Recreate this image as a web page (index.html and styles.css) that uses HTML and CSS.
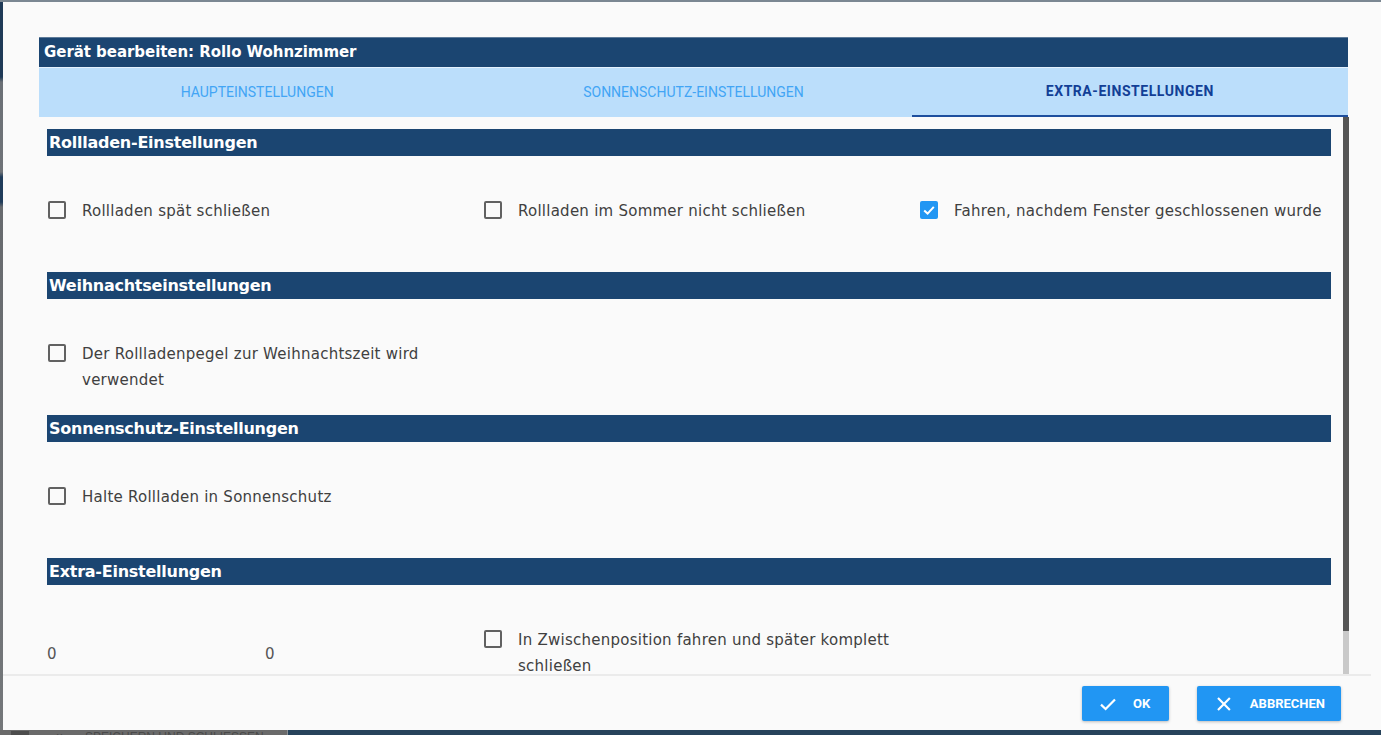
FILE: index.html
```html
<!DOCTYPE html>
<html lang="de">
<head>
<meta charset="utf-8">
<title>Gerät bearbeiten</title>
<link rel="stylesheet" href="styles.css">
</head>
<body>
<div class="screen">
  <div class="top-strip"></div>
  <div class="mid">
    <div class="left-strip"></div>
    <div class="dialog">
      <div class="dialog-head">
        <div class="title">Gerät bearbeiten: Rollo Wohnzimmer</div>
        <div class="tabs">
          <div class="tab">HAUPTEINSTELLUNGEN</div>
          <div class="tab">SONNENSCHUTZ-EINSTELLUNGEN</div>
          <div class="tab active">EXTRA-EINSTELLUNGEN</div>
        </div>
      </div>
      <div class="scroll">
        <div class="content">
          <section class="section">
            <h2 class="section-title">Rollladen-Einstellungen</h2>
            <div class="section-body">
              <label class="check"><span class="box"></span><span class="text">Rollladen spät schließen</span></label>
              <label class="check"><span class="box"></span><span class="text">Rollladen im Sommer nicht schließen</span></label>
              <label class="check"><span class="box checked"><svg viewBox="0 0 18 18" width="18" height="18"><path d="M4.2 9.4 L7.6 12.6 L13.8 5.8" fill="none" stroke="#fff" stroke-width="2"/></svg></span><span class="text">Fahren, nachdem Fenster geschlossenen wurde</span></label>
            </div>
          </section>
          <section class="section">
            <h2 class="section-title">Weihnachtseinstellungen</h2>
            <div class="section-body">
              <label class="check"><span class="box"></span><span class="text">Der Rollladenpegel zur Weihnachtszeit wird verwendet</span></label>
            </div>
          </section>
          <section class="section">
            <h2 class="section-title">Sonnenschutz-Einstellungen</h2>
            <div class="section-body">
              <label class="check"><span class="box"></span><span class="text">Halte Rollladen in Sonnenschutz</span></label>
            </div>
          </section>
          <section class="section">
            <h2 class="section-title">Extra-Einstellungen</h2>
            <div class="section-body">
              <div class="sliders">
                <span class="val">0</span>
                <span class="val">0</span>
              </div>
              <label class="check"><span class="box"></span><span class="text">In Zwischenposition fahren und später komplett schließen</span></label>
            </div>
          </section>
        </div>
        <div class="scrollbar"><div class="thumb"></div></div>
      </div>
      <div class="footer">
        <button class="btn" type="button">
          <svg viewBox="0 0 16 16" width="16" height="16"><path d="M1 8.6 L5.6 13 L15 3.4" fill="none" stroke="#fff" stroke-width="2.2"/></svg>
          <span>OK</span>
        </button>
        <button class="btn" type="button">
          <svg viewBox="0 0 14 14" width="14" height="14"><path d="M1 1 L13 13 M13 1 L1 13" fill="none" stroke="#fff" stroke-width="2.2"/></svg>
          <span>ABBRECHEN</span>
        </button>
      </div>
    </div>
  </div>
  <div class="bottom-strip">
    <div class="bs-left"><span class="bs-icon"></span><span class="bs-x">×</span><span class="bs-text">SPEICHERN UND SCHLIESSEN</span></div>
    <div class="bs-right"></div>
  </div>
</div>
</body>
</html>
```

FILE: styles.css
```css
* { box-sizing: border-box; }
html, body { margin: 0; padding: 0; }
body {
  width: 1381px;
  height: 735px;
  overflow: hidden;
  font-family: "DejaVu Sans", sans-serif;
  background: #5d6166;
}
.screen {
  display: flex;
  flex-direction: column;
  width: 1381px;
  height: 735px;
}
.top-strip {
  height: 2px;
  background: #7b8792;
  flex: none;
}
.mid {
  flex: 1;
  display: flex;
  min-height: 0;
}
.left-strip {
  width: 3px;
  flex: none;
  background: linear-gradient(#1f3a57 0, #1f3a57 75px, #6b7076 80px, #6f7378 170px, #203c5a 175px, #203c5a 200px, #676a6e 205px, #74777a 735px);
}
.dialog {
  flex: 1;
  min-width: 0;
  background: #fafafa;
  display: flex;
  flex-direction: column;
  padding-top: 35px;
}
.dialog-head {
  margin: 0 33px 0 36px;
}
.title {
  height: 30px;
  background: #1b4571;
  border-top: 1px solid #5e7b99;
  color: #fff;
  font-weight: bold;
  font-size: 15px;
  line-height: 28px;
  padding-left: 5px;
  letter-spacing: -0.05px;
}
.tabs {
  display: grid;
  grid-template-columns: 1fr 1fr 1fr;
  height: 50px;
  background: #bbdefb;
  border-top: 1px solid #e4f1fd;
}
.tab {
  font-family: Roboto, sans-serif;
  font-size: 14px;
  color: #42a5f5;
  text-align: center;
  line-height: 49px;
}
.tab.active {
  color: #123f96;
  font-weight: bold;
  letter-spacing: 0.55px;
  border-bottom: 2px solid #1e4f9e;
  line-height: 47px;
}
.scroll {
  height: 557px;
  flex: none;
  display: flex;
  margin: 0 32px 0 36px;
}
.content {
  flex: 1;
  overflow: hidden;
  padding: 12px 0 0 8px;
}
.scrollbar {
  width: 6px;
  flex: none;
  background: #c9c9c9;
}
.thumb {
  height: 514px;
  background: #555555;
}
.section-title {
  margin: 0 12px 0 0;
  height: 27px;
  background: #1b4571;
  color: #fff;
  font-size: 16px;
  font-weight: bold;
  line-height: 28px;
  padding-left: 2px;
  letter-spacing: -0.25px;
}
.section-body {
  height: 116px;
  padding-top: 42px;
  display: grid;
  grid-template-columns: 436px 436px 1fr;
  align-items: start;
}
.check {
  display: flex;
  align-items: flex-start;
  gap: 16px;
  padding-left: 1px;
  padding-right: 10px;
}
.box {
  flex: none;
  width: 18px;
  height: 18px;
  margin-top: 3px;
  border: 2px solid #616161;
  border-radius: 2px;
  display: flex;
  align-items: center;
  justify-content: center;
}
.box.checked {
  background: #2196f3;
  border: none;
}
.text {
  font-size: 15px;
  line-height: 26px;
  letter-spacing: 0.25px;
  color: #404040;
}
.sliders {
  display: grid;
  grid-template-columns: 218px 218px;
  padding-top: 14px;
}
.val {
  font-size: 15px;
  line-height: 26px;
  color: #555;
}
.footer {
  flex: 1;
  margin-right: 10px;
  border-top: 2px solid #ebebeb;
  display: flex;
  justify-content: flex-end;
  align-items: flex-start;
  gap: 28px;
  padding: 10px 30px 0 0;
}
.btn {
  height: 35px;
  border: none;
  border-radius: 2px;
  background: #2196f3;
  color: #fff;
  font-family: Roboto, sans-serif;
  font-weight: bold;
  font-size: 13px;
  display: flex;
  align-items: center;
  gap: 17px;
  padding: 0 16px 0 18px;
  box-shadow: 0 1px 3px rgba(0,0,0,0.25);
}
.btn:first-child { width: 87px; }
.btn:last-child { width: 144px; gap: 19px; padding-left: 20px; }
.bottom-strip {
  height: 5px;
  flex: none;
  display: flex;
  overflow: hidden;
}
.bs-left {
  width: 288px;
  background: #6a6a6a;
  border-right: 1px solid #8a8f94;
  overflow: hidden;
  display: flex;
  align-items: flex-start;
  padding-left: 11px;
}
.bs-icon {
  width: 18px;
  height: 10px;
  margin-top: 1px;
  background: #4d4d4d;
  flex: none;
}
.bs-x, .bs-text {
  font-family: "Liberation Sans", sans-serif;
  font-size: 12px;
  line-height: 12px;
  color: #4a4a4a;
  margin-top: 1px;
  white-space: nowrap;
}
.bs-x { margin-left: 27px; }
.bs-text { margin-left: 22px; }
.bs-right {
  flex: 1;
  background: #27435b;
}
```
